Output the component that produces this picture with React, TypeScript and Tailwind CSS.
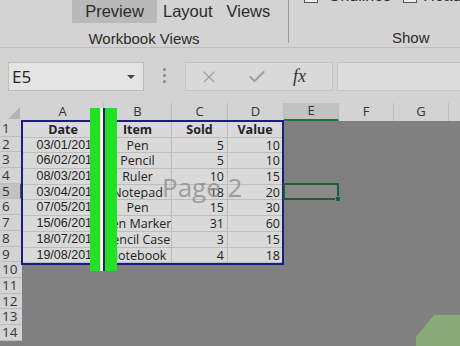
import { X, Check } from "lucide-react";

const cols = [
  { key: "A", w: 82 },
  { key: "B", w: 68 },
  { key: "C", w: 56 },
  { key: "D", w: 56 },
  { key: "E", w: 55 },
  { key: "F", w: 55 },
  { key: "G", w: 55 },
  { key: "H", w: 40 },
];

const rows = [
  ["Date", "Item", "Sold", "Value"],
  ["03/01/2015", "Pen", "5", "10"],
  ["06/02/2015", "Pencil", "5", "10"],
  ["08/03/2015", "Ruler", "10", "15"],
  ["03/04/2015", "Notepad", "18", "20"],
  ["07/05/2015", "Pen", "15", "30"],
  ["15/06/2015", "Pen Marker", "31", "60"],
  ["18/07/2015", "Pencil Case", "3", "15"],
  ["19/08/2015", "Notebook", "4", "18"],
];

const font = { fontFamily: '"Open Sans", "Liberation Sans", sans-serif' };
const ui = { fontFamily: '"Liberation Sans", Arial, sans-serif' };

function Ribbon() {
  return (
    <div className="flex h-[48px] bg-[#d3d3d3] border-b border-[#bdbdbd]" style={ui}>
      <div className="w-[288px] shrink-0 flex flex-col">
        <div className="flex h-[23px] items-center text-[16.5px] text-[#2b2b2b]">
          <div className="ml-[72px] w-[85px] h-full bg-[#b9b9b9] flex items-center justify-center">
            Preview
          </div>
          <div className="ml-[6px]">Layout</div>
          <div className="ml-[14px]">Views</div>
        </div>
        <div className="text-center text-[15px] text-[#2b2b2b] mt-[5px]">Workbook Views</div>
      </div>
      <div className="w-px h-[43px] bg-[#9a9a9a]" />
      <div className="flex-1 min-w-0 flex flex-col">
        <div className="flex items-center h-[10px] -mt-[9px] text-[16px] text-[#2b2b2b] whitespace-nowrap">
          <div className="ml-[15px] shrink-0 w-[14px] h-[14px] border border-[#555] bg-[#eee]" />
          <div className="ml-[10px]">Gridlines</div>
          <div className="ml-[12px] shrink-0 w-[14px] h-[14px] border border-[#555] bg-[#eee]" />
          <div className="ml-[6px]">Headings</div>
        </div>
        <div className="text-[15px] text-[#2b2b2b] mt-[26px] ml-[103px]">Show</div>
      </div>
    </div>
  );
}

function FormulaBar() {
  return (
    <div className="flex h-[55px] bg-[#d3d3d3] pt-[14px]">
      <div className="ml-[8px] shrink-0 w-[136px] h-[29px] bg-[#e4e4e4] border border-[#bdbdbd] flex items-center justify-between px-[3px]">
        <span className="text-[17px] text-[#222]">E5</span>
        <svg width="10" height="6" viewBox="0 0 10 6" className="mr-[4px]">
          <path d="M1 1h8L5 5z" fill="#444" />
        </svg>
      </div>
      <div className="ml-[19px] mt-[6px] flex flex-col gap-[3px]">
        <div className="w-[3px] h-[3px] rounded-full bg-[#8a8a8a]" />
        <div className="w-[3px] h-[3px] rounded-full bg-[#8a8a8a]" />
        <div className="w-[3px] h-[3px] rounded-full bg-[#8a8a8a]" />
      </div>
      <div className="ml-[19px] shrink-0 w-[148px] h-[29px] bg-[#d9d9d9] border border-[#c4c4c4] flex items-center">
        <X size={20} strokeWidth={1.3} className="ml-[13px] text-[#9c9c9c]" />
        <Check size={20} strokeWidth={2.4} className="ml-[28px] text-[#9c9c9c]" />
        <span className="ml-[26px] italic text-[18px] text-[#333]" style={{ fontFamily: '"Liberation Serif", serif' }}>
          fx
        </span>
      </div>
      <div className="ml-[4px] flex-1 h-[29px] bg-[#dcdcdc] border border-[#c4c4c4] border-r-0" />
    </div>
  );
}

function Sheet() {
  const rh = "h-[15.7px]";
  return (
    <div className="relative flex">
      {/* row headers */}
      <div className="w-[22px] shrink-0 flex flex-col bg-[#d3d3d3]">
        <div className="h-[18px] flex items-end justify-end pr-[2px] pb-[2px]">
          <svg width="12" height="12" viewBox="0 0 12 12">
            <path d="M12 0V12H0z" fill="#b3b3b3" />
          </svg>
        </div>
        {Array.from({ length: 14 }).map((_, i) => (
          <div
            key={i}
            className={`${rh} border-b border-[#bcbcbc] text-[13.5px] leading-[15px] pl-[2px] text-[#333] ${
              i === 4 ? "bg-[#c2c2c2] border-r-2 border-r-[#217346]" : ""
            }`}
          >
            {i + 1}
          </div>
        ))}
      </div>
      <div className="flex-1 min-w-0 flex flex-col">
        {/* column headers */}
        <div className="flex h-[18px] bg-[#d3d3d3]">
          {cols.map((c) => (
            <div
              key={c.key}
              style={{ width: c.w }}
              className={`shrink-0 flex items-center justify-center text-[13px] text-[#333] border-r border-[#bcbcbc] ${
                c.key === "E" ? "bg-[#c2c2c2] border-b-2 border-b-[#217346]" : ""
              }`}
            >
              {c.key}
            </div>
          ))}
        </div>
        {/* body */}
        <div className="flex-1 bg-[#808080]">
          <div className="w-[263px] border-2 border-[#1c1c7c] bg-[#d9d9d9] -ml-[1px] -mt-[1px]">
            {rows.map((r, i) => (
              <div key={i} className={`flex ${rh} text-[12.5px] text-[#222] leading-[15px]`}>
                <div
                  className={`w-[81px] border-r border-b border-[#bdbdbd] ${i === 0 ? "text-center font-bold" : "text-right pr-[4px]"}`}
                  style={i === 0 ? undefined : ui}
                >
                  {r[0]}
                </div>
                <div className={`w-[68px] border-r border-b border-[#bdbdbd] text-center whitespace-nowrap overflow-hidden ${i === 0 ? "font-bold" : ""}`}>
                  {r[1]}
                </div>
                <div className={`w-[56px] border-r border-b border-[#bdbdbd] px-[3px] ${i === 0 ? "text-center font-bold" : "text-right"}`}>
                  {r[2]}
                </div>
                <div className={`w-[54px] border-b border-[#bdbdbd] px-[2px] ${i === 0 ? "text-center font-bold" : "text-right"}`}>
                  {r[3]}
                </div>
              </div>
            ))}
          </div>
        </div>
      </div>

      {/* page break drag highlight */}
      <div className="absolute left-[90px] top-[5px] w-[27px] h-[163px] bg-[#22e022] flex">
        <div className="ml-[10px] w-[5px] h-full bg-white border-r-2 border-[#1c1c7c]" />
      </div>

      {/* page watermark */}
      <div className="absolute left-[162px] top-[71px] text-[26px] text-[#8c8c8c]/80 leading-none">Page 2</div>

      {/* selected cell E5 */}
      <div className="absolute left-[283px] top-[80px] w-[56px] h-[17px] border-2 border-[#1e5e34] bg-[#8a8a8a]">
        <div className="absolute -right-[4px] -bottom-[4px] w-[6px] h-[6px] bg-[#1e5e34] border border-[#808080]" />
      </div>

      {/* bottom right shape */}
      <svg className="absolute left-[400px] top-[208px]" width="60" height="40" viewBox="0 0 60 40">
        <path d="M34 4H60V40H16V26z" fill="#8aab77" />
      </svg>
    </div>
  );
}

export default function App() {
  return (
    <div className="w-[460px] h-[346px] overflow-hidden bg-[#808080]" style={font}>
      <Ribbon />
      <FormulaBar />
      <Sheet />
    </div>
  );
}
